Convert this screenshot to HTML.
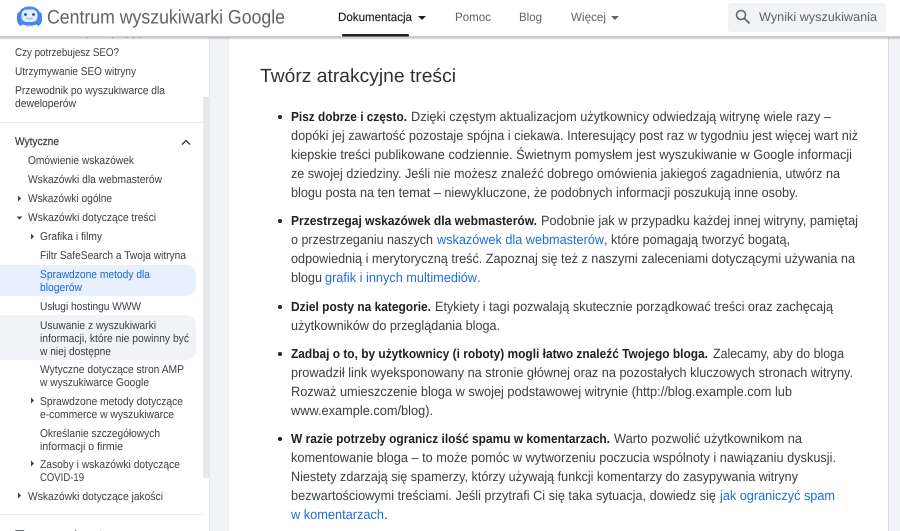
<!DOCTYPE html>
<html lang="pl"><head><meta charset="utf-8"><title>Centrum wyszukiwarki Google</title>
<style>
html,body{margin:0;padding:0;background:#fff;width:900px;height:531px;overflow:hidden}
svg{display:block;font-family:"Liberation Sans",sans-serif;filter:blur(.3px)}
.b{font-size:13.5px}
.b text{fill:#3c4043}
.s{font-size:11.300px;fill:#3c4043}
.b text.k{font-size:13px;font-weight:bold;fill:#202124}
.b text.l{fill:#1f6fd6}
</style></head><body>
<svg width="900" height="531" viewBox="0 0 900 531" xmlns="http://www.w3.org/2000/svg" text-rendering="geometricPrecision">
<defs><linearGradient id="sh" x1="0" y1="0" x2="0" y2="1"><stop offset="0" stop-color="#000" stop-opacity=".25"/><stop offset="1" stop-color="#000" stop-opacity="0"/></linearGradient></defs>
<rect width="900" height="531" fill="#fff"/>
<rect x="209" y="0" width="19" height="531" fill="#f1f3f6"/>
<rect x="889" y="0" width="11" height="531" fill="#f1f3f6"/>
<rect x="228" y="0" width="1" height="531" fill="#e8eaed"/>
<rect x="888" y="0" width="1" height="531" fill="#dadce0"/>
<rect x="203" y="97" width="6" height="381" fill="#e6e8ec"/>
<rect x="209" y="0" width="1" height="531" fill="#e3e5e8"/>

<!-- sidebar -->
<g>
<text class="s" x="15" y="35" textLength="140" lengthAdjust="spacingAndGlyphs">Przewodnik dla początkujących</text>
<text class="s" x="15" y="56" textLength="104" lengthAdjust="spacingAndGlyphs">Czy potrzebujesz SEO?</text>
<text class="s" x="15" y="75" textLength="121" lengthAdjust="spacingAndGlyphs">Utrzymywanie SEO witryny</text>
<text class="s" x="15" y="94" textLength="150" lengthAdjust="spacingAndGlyphs">Przewodnik po wyszukiwarce dla</text>
<text class="s" x="15" y="107" textLength="61" lengthAdjust="spacingAndGlyphs">deweloperów</text>
<rect x="0" y="122" width="203" height="1" fill="#e8eaed"/>
<text class="s" x="15" y="145" textLength="44" lengthAdjust="spacingAndGlyphs" stroke="#3c4043" stroke-width=".25">Wytyczne</text>
<path d="M182 144.500l4-4 4 4" fill="none" stroke="#3c4043" stroke-width="1.400"/>
<text class="s" x="28" y="164" textLength="106" lengthAdjust="spacingAndGlyphs">Omówienie wskazówek</text>
<text class="s" x="28" y="183" textLength="134" lengthAdjust="spacingAndGlyphs">Wskazówki dla webmasterów</text>
<path d="M18 195.500l3 3-3 3z" fill="#3c4043"/>
<text class="s" x="28" y="202" textLength="84" lengthAdjust="spacingAndGlyphs">Wskazówki ogólne</text>
<path d="M16.500 216.500h6l-3 3z" fill="#3c4043"/>
<text class="s" x="28" y="221" textLength="128" lengthAdjust="spacingAndGlyphs">Wskazówki dotyczące treści</text>
<path d="M31 233.500l3 3-3 3z" fill="#3c4043"/>
<text class="s" x="40" y="240" textLength="62" lengthAdjust="spacingAndGlyphs">Grafika i filmy</text>
<text class="s" x="40" y="259" textLength="146" lengthAdjust="spacingAndGlyphs">Filtr SafeSearch a Twoja witryna</text>
<path d="M0 265h186a10 10 0 0 1 10 10v11a10 10 0 0 1-10 10H0z" fill="#e8f0fe"/>
<text class="s" x="40" y="278" textLength="110" lengthAdjust="spacingAndGlyphs" style="fill:#1967d2">Sprawdzone metody dla</text>
<text class="s" x="40" y="291" textLength="42" lengthAdjust="spacingAndGlyphs" style="fill:#1967d2">blogerów</text>
<text class="s" x="40" y="310" textLength="101" lengthAdjust="spacingAndGlyphs">Usługi hostingu WWW</text>
<path d="M0 315h186a10 10 0 0 1 10 10v25a10 10 0 0 1-10 10H0z" fill="#f1f3f6"/>
<text class="s" x="40" y="329" textLength="116" lengthAdjust="spacingAndGlyphs">Usuwanie z wyszukiwarki</text>
<text class="s" x="40" y="342" textLength="149" lengthAdjust="spacingAndGlyphs">informacji, które nie powinny być</text>
<text class="s" x="40" y="355" textLength="71" lengthAdjust="spacingAndGlyphs">w niej dostępne</text>
<text class="s" x="40" y="373" textLength="144" lengthAdjust="spacingAndGlyphs">Wytyczne dotyczące stron AMP</text>
<text class="s" x="40" y="386" textLength="109" lengthAdjust="spacingAndGlyphs">w wyszukiwarce Google</text>
<path d="M31 397.500l3 3-3 3z" fill="#3c4043"/>
<text class="s" x="40" y="405" textLength="143" lengthAdjust="spacingAndGlyphs">Sprawdzone metody dotyczące</text>
<text class="s" x="40" y="418" textLength="134" lengthAdjust="spacingAndGlyphs">e-commerce w wyszukiwarce</text>
<text class="s" x="40" y="437" textLength="120" lengthAdjust="spacingAndGlyphs">Określanie szczegółowych</text>
<text class="s" x="40" y="450" textLength="83" lengthAdjust="spacingAndGlyphs">informacji o firmie</text>
<path d="M31 460.500l3 3-3 3z" fill="#3c4043"/>
<text class="s" x="40" y="468" textLength="140" lengthAdjust="spacingAndGlyphs">Zasoby i wskazówki dotyczące</text>
<text class="s" x="40" y="481" textLength="44" lengthAdjust="spacingAndGlyphs">COVID-19</text>
<path d="M18 492.500l3 3-3 3z" fill="#3c4043"/>
<text class="s" x="28" y="500" textLength="135" lengthAdjust="spacingAndGlyphs">Wskazówki dotyczące jakości</text>
<rect x="0" y="514" width="203" height="1" fill="#e8eaed"/>
<text class="s" x="15" y="538" textLength="110" lengthAdjust="spacingAndGlyphs">Tworzenie stron</text>
</g>

<!-- content -->
<text x="260" y="82" font-size="19" fill="#303134" textLength="196" lengthAdjust="spacingAndGlyphs">Twórz atrakcyjne treści</text>
<g fill="#202124"><circle cx="280" cy="117" r="2"/><circle cx="280" cy="221" r="2"/><circle cx="280" cy="307" r="2"/><circle cx="280" cy="354" r="2"/><circle cx="280" cy="439" r="2"/></g>
<g class="b">
<text class="k" x="291" y="121" textLength="116" lengthAdjust="spacingAndGlyphs">Pisz dobrze i często.</text>
<text x="411" y="121" textLength="420" lengthAdjust="spacingAndGlyphs">Dzięki częstym aktualizacjom użytkownicy odwiedzają witrynę wiele razy –</text>
<text x="291" y="140" textLength="567" lengthAdjust="spacingAndGlyphs">dopóki jej zawartość pozostaje spójna i ciekawa. Interesujący post raz w tygodniu jest więcej wart niż</text>
<text x="291" y="159" textLength="561" lengthAdjust="spacingAndGlyphs">kiepskie treści publikowane codziennie. Świetnym pomysłem jest wyszukiwanie w Google informacji</text>
<text x="291" y="178" textLength="549" lengthAdjust="spacingAndGlyphs">ze swojej dziedziny. Jeśli nie możesz znaleźć dobrego omówienia jakiegoś zagadnienia, utwórz na</text>
<text x="291" y="197" textLength="507" lengthAdjust="spacingAndGlyphs">blogu posta na ten temat – niewykluczone, że podobnych informacji poszukują inne osoby.</text>

<text class="k" x="291" y="225" textLength="246" lengthAdjust="spacingAndGlyphs">Przestrzegaj wskazówek dla webmasterów.</text>
<text x="541" y="225" textLength="317" lengthAdjust="spacingAndGlyphs">Podobnie jak w przypadku każdej innej witryny, pamiętaj</text>
<text x="291" y="244" textLength="142" lengthAdjust="spacingAndGlyphs">o przestrzeganiu naszych</text>
<text class="l" x="437" y="244" textLength="167" lengthAdjust="spacingAndGlyphs">wskazówek dla webmasterów</text>
<text x="604" y="244" textLength="186" lengthAdjust="spacingAndGlyphs">, które pomagają tworzyć bogatą,</text>
<text x="291" y="263" textLength="564" lengthAdjust="spacingAndGlyphs">odpowiednią i merytoryczną treść. Zapoznaj się też z naszymi zaleceniami dotyczącymi używania na</text>
<text x="291" y="282" textLength="31" lengthAdjust="spacingAndGlyphs">blogu</text>
<text class="l" x="325" y="282" textLength="152" lengthAdjust="spacingAndGlyphs">grafik i innych multimediów</text>
<text class="l" x="477" y="282">.</text>

<text class="k" x="291" y="311" textLength="140" lengthAdjust="spacingAndGlyphs">Dziel posty na kategorie.</text>
<text x="435" y="311" textLength="398" lengthAdjust="spacingAndGlyphs">Etykiety i tagi pozwalają skutecznie porządkować treści oraz zachęcają</text>
<text x="291" y="330" textLength="209" lengthAdjust="spacingAndGlyphs">użytkowników do przeglądania bloga.</text>

<text class="k" x="291" y="358" textLength="417" lengthAdjust="spacingAndGlyphs">Zadbaj o to, by użytkownicy (i roboty) mogli łatwo znaleźć Twojego bloga.</text>
<text x="713" y="358" textLength="131" lengthAdjust="spacingAndGlyphs">Zalecamy, aby do bloga</text>
<text x="291" y="377" textLength="562" lengthAdjust="spacingAndGlyphs">prowadził link wyeksponowany na stronie głównej oraz na pozostałych kluczowych stronach witryny.</text>
<text x="291" y="396" textLength="501" lengthAdjust="spacingAndGlyphs">Rozważ umieszczenie bloga w swojej podstawowej witrynie (http://blog.example.com lub</text>
<text x="291" y="415" textLength="142" lengthAdjust="spacingAndGlyphs">www.example.com/blog).</text>

<text class="k" x="291" y="443" textLength="319" lengthAdjust="spacingAndGlyphs">W razie potrzeby ogranicz ilość spamu w komentarzach.</text>
<text x="614" y="443" textLength="188" lengthAdjust="spacingAndGlyphs">Warto pozwolić użytkownikom na</text>
<text x="291" y="462" textLength="545" lengthAdjust="spacingAndGlyphs">komentowanie bloga – to może pomóc w wytworzeniu poczucia wspólnoty i nawiązaniu dyskusji.</text>
<text x="291" y="481" textLength="507" lengthAdjust="spacingAndGlyphs">Niestety zdarzają się spamerzy, którzy używają funkcji komentarzy do zasypywania witryny</text>
<text x="291" y="500" textLength="425" lengthAdjust="spacingAndGlyphs">bezwartościowymi treściami. Jeśli przytrafi Ci się taka sytuacja, dowiedz się</text>
<text class="l" x="720" y="500" textLength="115" lengthAdjust="spacingAndGlyphs">jak ograniczyć spam</text>
<text class="l" x="291" y="519" textLength="93" lengthAdjust="spacingAndGlyphs">w komentarzach</text>
<text x="384" y="519">.</text>
</g>

<!-- header -->
<rect x="0" y="37" width="900" height="3" fill="url(#sh)"/>
<rect x="0" y="0" width="900" height="37" fill="#fff"/>
<rect x="0" y="36" width="900" height="1" fill="#c9cbce"/>
<!-- logo -->
<path d="M17 15.500c0-2 1-3 2.500-3.500C21 8.500 24.500 6.500 29.500 6.500s8.500 2 10 5.500c1.500.5 2.500 1.500 2.500 3.500v4c0 3-1.500 5-3.500 6.500l-2-1.500c-2 .8-4 1-7 1s-5-.2-7-1l-2 1.500c-2-1.500-3.500-3.500-3.500-6.500z" fill="#4285f4"/>
<rect x="21.500" y="9.500" width="16" height="12.500" rx="5" fill="#e3edfd"/>
<circle cx="25.500" cy="14.500" r="1.400" fill="#1a56b0"/><circle cx="33.500" cy="14.500" r="1.400" fill="#1a56b0"/>
<path d="M26.500 18q3 1.500 6 0" fill="none" stroke="#8fb4f2" stroke-width="1"/>
<g fill="#a9c4f5"><circle cx="27" cy="26.200" r=".7"/><circle cx="29.500" cy="26.200" r=".7"/><circle cx="32" cy="26.200" r=".7"/></g>
<text x="47" y="23.500" font-size="19.500" fill="#5f6368" textLength="238" lengthAdjust="spacingAndGlyphs">Centrum wyszukiwarki Google</text>

<text x="338" y="21" font-size="12" fill="#202124" stroke="#202124" stroke-width=".15" textLength="74" lengthAdjust="spacingAndGlyphs">Dokumentacja</text>
<path d="M418 16h8l-4 4z" fill="#202124"/>
<rect x="342" y="34" width="67" height="2.500" rx="1" fill="#202124"/>
<text x="455" y="21" font-size="12" fill="#5f6368" textLength="36" lengthAdjust="spacingAndGlyphs">Pomoc</text>
<text x="519" y="21" font-size="12" fill="#5f6368" textLength="23" lengthAdjust="spacingAndGlyphs">Blog</text>
<text x="571" y="21" font-size="12" fill="#5f6368" textLength="35" lengthAdjust="spacingAndGlyphs">Więcej</text>
<path d="M611 16h8l-4 4z" fill="#5f6368"/>

<rect x="728" y="3" width="158" height="29" rx="3" fill="#f1f3f4"/>
<circle cx="741" cy="15" r="4.500" fill="none" stroke="#5f6368" stroke-width="1.500"/>
<path d="M744.500 18.500l5 5" stroke="#5f6368" stroke-width="1.700"/>
<text x="759" y="21" font-size="12.500" fill="#5f6368" textLength="118" lengthAdjust="spacingAndGlyphs">Wyniki wyszukiwania</text>
</svg>
</body></html>
